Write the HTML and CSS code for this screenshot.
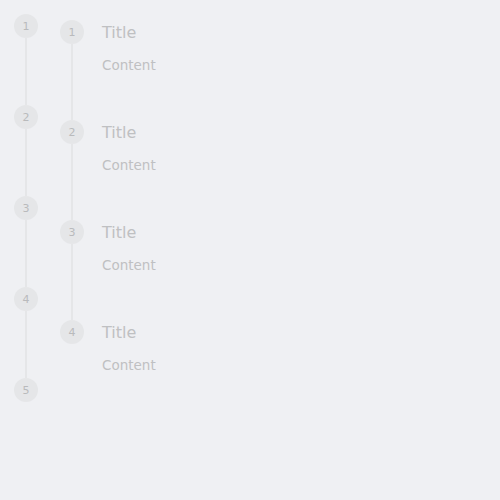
FILE: index.html
```html
<!DOCTYPE html>
<html>
<head>
<meta charset="utf-8">
<link rel="stylesheet" href="styles.css">
</head>
<body>
<div class="page">
  <div class="dots">
    <div class="dot-step"><div class="circle">1</div><div class="vline"></div></div>
    <div class="dot-step"><div class="circle">2</div><div class="vline"></div></div>
    <div class="dot-step"><div class="circle">3</div><div class="vline"></div></div>
    <div class="dot-step"><div class="circle">4</div><div class="vline"></div></div>
    <div class="dot-step last"><div class="circle">5</div></div>
  </div>
  <div class="steps">
    <div class="step">
      <div class="rail"><div class="circle">1</div><div class="vline"></div></div>
      <div class="body"><div class="title">Title</div><div class="content">Content</div></div>
    </div>
    <div class="step">
      <div class="rail"><div class="circle">2</div><div class="vline"></div></div>
      <div class="body"><div class="title">Title</div><div class="content">Content</div></div>
    </div>
    <div class="step">
      <div class="rail"><div class="circle">3</div><div class="vline"></div></div>
      <div class="body"><div class="title">Title</div><div class="content">Content</div></div>
    </div>
    <div class="step last">
      <div class="rail"><div class="circle">4</div></div>
      <div class="body"><div class="title">Title</div><div class="content">Content</div></div>
    </div>
  </div>
</div>
</body>
</html>
```
FILE: styles.css
```css
html, body {
  margin: 0;
  padding: 0;
  background: #eff0f3;
  width: 500px;
  height: 500px;
  font-family: "DejaVu Sans", sans-serif;
}
.page {
  display: flex;
  padding: 14px 0 0 14px;
  gap: 22px;
}
.dots {
  display: flex;
  flex-direction: column;
  width: 24px;
}
.dot-step {
  display: flex;
  flex-direction: column;
  align-items: center;
  height: 91px;
}
.dot-step.last { height: 24px; }
.circle {
  width: 24px;
  height: 24px;
  border-radius: 50%;
  background: #e5e6e8;
  color: #b9babc;
  font-size: 11px;
  display: flex;
  align-items: center;
  justify-content: center;
  flex-shrink: 0;
}
.vline {
  width: 2px;
  flex: 1;
  background: #e5e6e8;
}
.steps {
  display: flex;
  flex-direction: column;
  padding-top: 6px;
}
.step {
  display: flex;
  height: 100px;
  gap: 18px;
}
.rail {
  display: flex;
  flex-direction: column;
  align-items: center;
  width: 24px;
}
.body {
  display: flex;
  flex-direction: column;
}
.title {
  height: 24px;
  line-height: 24px;
  font-size: 16px;
  color: #bfc0c2;
  padding-top: 1px;
}
.content {
  margin-top: 11px;
  line-height: 18px;
  font-size: 13.5px;
  color: #bfc0c2;
}
```
